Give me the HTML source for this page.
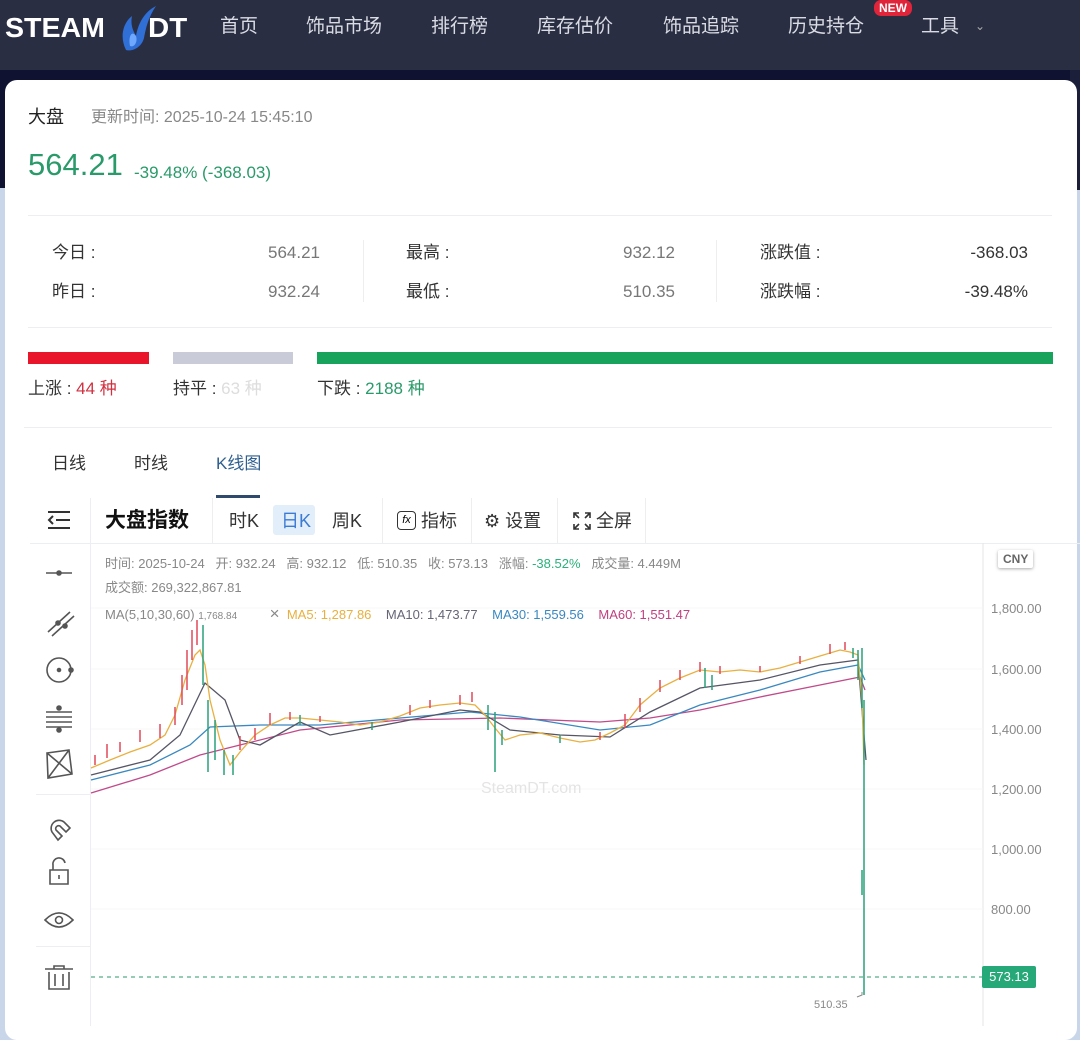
<!DOCTYPE html>
<html><head><meta charset="utf-8"><style>
*{margin:0;padding:0;box-sizing:border-box}
body{width:1080px;height:1026px;overflow:hidden;background:#c9d6ea;font-family:"Liberation Sans","Noto Sans CJK SC",sans-serif;position:relative}
.hdr{position:absolute;left:0;top:0;width:1080px;height:70px;background:#2a2e42}
.band{position:absolute;left:0;top:68px;width:1080px;height:120px;background:#0f1230}
.rside{position:absolute;right:0;top:68px;width:10px;height:122px;background:#1b1f3a}
.nav{position:absolute;top:17px;font-size:19px;line-height:1;color:#d9dce4}
.logo{position:absolute;top:14px;font-size:28px;line-height:1;font-weight:900;color:#fff;transform-origin:left}
.card{position:absolute;left:5px;top:80px;width:1072px;height:960px;background:#fff;border-radius:12px}
.a{position:absolute;white-space:nowrap;line-height:1}
.g{color:#2a9a6a}
.hr{position:absolute;height:1px;background:#eceef2}
.lbl{font-size:17px;color:#333}
.num{font-size:17px;color:#777}
.r{text-align:right}
.tb{font-size:18px;color:#333}
.ax{font-size:13px;color:#888}
.info{font-size:13px;color:#888}
</style></head><body>
<div class="band"></div><div class="rside"></div>
<div class="hdr">
<div class="logo" style="left:5px;transform:scaleX(1.02)">STEAM</div>
<div class="logo" style="left:148px;transform:scaleX(1.05)">DT</div>
<svg style="position:absolute;left:112px;top:2px" width="50" height="52" viewBox="0 0 50 52"><path d="M14 48 C8 36 10 22 20 14 C18 24 22 30 24 34 C26 22 32 10 44 4 C36 16 34 26 32 36 C30 44 22 50 14 48Z" fill="#2f6fd6"/><path d="M18 44 C16 34 20 28 24 34 C26 40 22 46 18 44Z" fill="#6fa8ff"/></svg>
<div class="nav" style="left:220px">首页</div>
<div class="nav" style="left:306px">饰品市场</div>
<div class="nav" style="left:431px">排行榜</div>
<div class="nav" style="left:537px">库存估价</div>
<div class="nav" style="left:663px">饰品追踪</div>
<div class="nav" style="left:788px">历史持仓</div>
<div class="a" style="left:874px;top:0;background:#e0243a;color:#fff;font-size:12px;font-weight:bold;padding:2px 5px;border-radius:7px">NEW</div>
<div class="nav" style="left:921px">工具</div>
<div class="a" style="left:975px;top:20px;color:#aaa;font-size:12px">&#8964;</div>
</div>
<div class="card"></div>
<div class="a" style="left:28px;top:108px;font-size:18px;color:#222">大盘</div>
<div class="a" style="left:91px;top:110px;font-size:16px;color:#888">更新时间: 2025-10-24 15:45:10</div>
<div class="a g" style="left:28px;top:149px;font-size:31px">564.21</div>
<div class="a g" style="left:134px;top:164px;font-size:17px">-39.48% (-368.03)</div>
<div class="hr" style="left:28px;top:215px;width:1024px"></div>
<div class="a lbl" style="left:52px;top:244px">今日 :</div><div class="a num g r" style="right:760px;top:244px">564.21</div>
<div class="a lbl" style="left:52px;top:283px">昨日 :</div><div class="a num r" style="right:760px;top:283px">932.24</div>
<div class="a" style="left:363px;top:240px;width:1px;height:62px;background:#eee"></div>
<div class="a lbl" style="left:406px;top:244px">最高 :</div><div class="a num g r" style="right:405px;top:244px">932.12</div>
<div class="a lbl" style="left:406px;top:283px">最低 :</div><div class="a num g r" style="right:405px;top:283px">510.35</div>
<div class="a" style="left:716px;top:240px;width:1px;height:62px;background:#eee"></div>
<div class="a lbl" style="left:760px;top:244px">涨跌值 :</div><div class="a num r" style="right:52px;top:244px;color:#333">-368.03</div>
<div class="a lbl" style="left:760px;top:283px">涨跌幅 :</div><div class="a num r" style="right:52px;top:283px;color:#333">-39.48%</div>
<div class="hr" style="left:28px;top:327px;width:1024px"></div>
<div class="a" style="left:28px;top:352px;width:121px;height:12px;background:#e8152b"></div>
<div class="a" style="left:173px;top:352px;width:120px;height:12px;background:#c9cbd8"></div>
<div class="a" style="left:317px;top:352px;width:736px;height:12px;background:#17a35c"></div>
<div class="a lbl" style="left:28px;top:380px">上涨 : <span style="color:#d03040">44 种</span></div>
<div class="a lbl" style="left:173px;top:380px">持平 : <span style="color:#ddd">63 种</span></div>
<div class="a lbl" style="left:317px;top:380px">下跌 : <span class="g">2188 种</span></div>
<div class="hr" style="left:24px;top:427px;width:1028px"></div>
<div class="a lbl" style="left:52px;top:455px">日线</div>
<div class="a lbl" style="left:134px;top:455px">时线</div>
<div class="a lbl" style="left:216px;top:455px;color:#2f5f8f">K线图</div>
<div class="a" style="left:216px;top:495px;width:44px;height:3px;background:#2f4a6a"></div>
<div class="hr" style="left:30px;top:543px;width:1050px"></div>
<div class="a" style="left:90px;top:498px;width:1px;height:528px;background:#eceef2"></div>
<svg class="a" style="left:46px;top:509px" width="26" height="22" fill="none" stroke="#333" stroke-width="2"><path d="M2 3H24M10 11H24M2 19H24M7 7L3 11L7 15"/></svg>
<div class="a" style="left:105px;top:510px;font-size:21px;font-weight:bold;color:#111">大盘指数</div>
<div class="a" style="left:212px;top:498px;width:1px;height:45px;background:#eee"></div>
<div class="a tb" style="left:229px;top:512px">时K</div>
<div class="a" style="left:273px;top:505px;width:42px;height:30px;background:#e3eefb;border-radius:3px"></div>
<div class="a tb" style="left:281px;top:512px;color:#3a7bd5">日K</div>
<div class="a tb" style="left:332px;top:512px">周K</div>
<div class="a" style="left:382px;top:498px;width:1px;height:45px;background:#eee"></div>
<div class="a" style="left:397px;top:511px;width:19px;height:19px;border:1.5px solid #333;border-radius:4px;font-size:11px;text-align:center;line-height:16px;font-style:italic">fx</div>
<div class="a tb" style="left:421px;top:512px">指标</div>
<div class="a" style="left:471px;top:498px;width:1px;height:45px;background:#eee"></div>
<div class="a tb" style="left:484px;top:512px">&#9881;&nbsp;设置</div>
<div class="a" style="left:557px;top:498px;width:1px;height:45px;background:#eee"></div>
<svg class="a" style="left:572px;top:511px" width="20" height="20" fill="none" stroke="#333" stroke-width="1.6"><path d="M2 7V2H7M13 2H18V7M18 13V18H13M7 18H2V13M2 2L7 7M18 2L13 7M18 18L13 13M2 18L7 13"/></svg>
<div class="a tb" style="left:596px;top:512px">全屏</div>
<div class="a" style="left:645px;top:498px;width:1px;height:45px;background:#eee"></div>
<svg class="a" style="left:36px;top:550px" width="50" height="440" viewBox="0 0 50 440" fill="none" stroke="#555" stroke-width="1.6">
<path d="M10 23 H36"/><circle cx="23" cy="23" r="2" fill="#555"/>
<path d="M12 82 L34 62 M16 86 L38 66"/><circle cx="22" cy="73" r="2" fill="#555"/><circle cx="29" cy="76" r="2" fill="#555"/>
<circle cx="23" cy="120" r="12"/><circle cx="23" cy="120" r="1.5" fill="#555"/><circle cx="35" cy="120" r="2" fill="#555"/>
<path d="M10 162 H36 M10 167 H36 M10 172 H36 M10 177 H36"/><circle cx="23" cy="158" r="2" fill="#555"/><circle cx="23" cy="180" r="2" fill="#555"/>
<path d="M11 203 L33 200 L36 224 L12 228 Z M11 203 L36 224 M33 200 L12 228"/>
<path d="M16 282 a8 8 0 0 1 12 -10 l6 6 l-4 4 l-6 -6 a3 3 0 0 0 -4 4 l6 6 l-4 4 z"/>
<path d="M14 320 h18 v14 h-18 z M17 320 v-5 a6 6 0 0 1 12 -2 M23 325 v4"/>
<path d="M9 370 Q23 356 37 370 Q23 384 9 370 Z"/><circle cx="23" cy="370" r="3.5"/>
<path d="M9 419 H37 M18 419 v-3 h10 v3 M13 422 v17 h20 v-17 M19 424 v12 M27 424 v12"/>
</svg>
<div class="hr" style="left:36px;top:794px;width:54px"></div>
<div class="hr" style="left:36px;top:946px;width:54px"></div>
<div class="a info" style="left:105px;top:557px">时间: 2025-10-24 &nbsp;&nbsp;开: 932.24 &nbsp;&nbsp;高: 932.12 &nbsp;&nbsp;低: 510.35 &nbsp;&nbsp;收: 573.13 &nbsp;&nbsp;涨幅: <span style="color:#2ab07a">-38.52%</span> &nbsp;&nbsp;成交量: 4.449M</div>
<div class="a info" style="left:105px;top:581px">成交额: 269,322,867.81</div>
<div class="a info" style="left:105px;top:605px">MA(5,10,30,60) <span style="font-size:10px">1,768.84</span> &nbsp;&nbsp;&nbsp;&nbsp;&nbsp;&nbsp;&nbsp;&nbsp;<span style="font-size:17px">×</span> &nbsp;<span style="color:#e8b040">MA5: 1,287.86</span> &nbsp;&nbsp;&nbsp;<span style="color:#667">MA10: 1,473.77</span> &nbsp;&nbsp;&nbsp;<span style="color:#3a88c0">MA30: 1,559.56</span> &nbsp;&nbsp;&nbsp;<span style="color:#c04080">MA60: 1,551.47</span></div>
<svg class="a" style="left:0;top:0" width="1080" height="1026" fill="none">
<line x1="983" y1="543" x2="983" y2="1026" stroke="#e5e5e5"/>
<g stroke="#f7f7f7"><line x1="91" y1="608" x2="983" y2="608"/><line x1="91" y1="669" x2="983" y2="669"/><line x1="91" y1="729" x2="983" y2="729"/><line x1="91" y1="789" x2="983" y2="789"/><line x1="91" y1="849" x2="983" y2="849"/><line x1="91" y1="909" x2="983" y2="909"/></g>
<line x1="91" y1="977" x2="983" y2="977" stroke="#2a9a6a" stroke-dasharray="4 4"/>
<polyline stroke="#c04a8a" stroke-width="1.3" points="91,793 150,775 200,755 240,745 300,730 400,720 500,718 600,722 650,718 700,710 760,697 820,685 860,677 865,690"/>
<polyline stroke="#3a88c0" stroke-width="1.3" points="91,780 150,765 190,745 210,727 260,725 320,725 400,718 470,712 520,717 600,730 650,725 700,705 760,690 820,672 858,665 865,680"/>
<polyline stroke="#556" stroke-width="1.3" points="91,775 150,760 180,735 205,683 225,700 240,740 260,745 300,722 330,735 400,722 460,710 480,712 510,730 560,735 610,737 650,712 700,688 760,680 820,665 858,660 866,760"/>
<polyline stroke="#e8b040" stroke-width="1.3" points="91,768 110,760 130,752 150,745 165,735 175,715 185,680 195,655 200,650 205,665 210,700 220,740 230,765 240,752 255,735 270,725 285,718 300,718 320,720 340,722 360,725 380,722 400,716 420,708 440,705 460,703 475,705 485,715 495,728 505,740 520,735 540,733 560,738 580,742 595,740 610,733 625,725 640,705 660,688 680,678 700,670 720,672 740,670 760,672 780,668 800,662 820,656 840,650 850,652 858,655 862,700 864,765"/>
<g stroke="#e04a5a" stroke-width="1.5">
<path d="M95 765v-10M107 758v-14M120 752v-10M140 742v-12M160 738v-14M175 725v-18M182 705v-30M187 690v-40M192 660v-30M197 645v-25M240 750v-14M255 740v-12M270 725v-12M290 720v-8M320 722v-6M410 715v-10M430 708v-8M460 705v-10M472 702v-10M600 740v-8M625 728v-14M640 712v-14M660 692v-12M680 680v-10M700 672v-10M720 674v-8M760 672v-6M800 664v-8M830 654v-10M845 650v-8"/>
</g>
<g stroke="#2aa07a" stroke-width="1.5">
<path d="M203 625v60M208 700v72M215 720v40M224 750v25M233 755v20M300 715v10M372 722v8M488 705v25M495 712v60M502 730v15M560 735v8M705 668v20M712 675v15M853 648v10M858 650v30M862 648v60M864 700v295M862 870v25"/>
</g>
<path d="M857 997 l5 -2 v-3" stroke="#888"/>
</svg>
<div class="a" style="left:481px;top:781px;font-size:16px;color:#e4e4e4">SteamDT.com</div>
<div class="a" style="left:998px;top:550px;font-size:12px;font-weight:bold;color:#666;padding:3px 5px;background:#fff;box-shadow:0 1px 3px #aaa;border-radius:2px">CNY</div>
<div class="a ax" style="left:991px;top:602px">1,800.00</div>
<div class="a ax" style="left:991px;top:663px">1,600.00</div>
<div class="a ax" style="left:991px;top:723px">1,400.00</div>
<div class="a ax" style="left:991px;top:783px">1,200.00</div>
<div class="a ax" style="left:991px;top:843px">1,000.00</div>
<div class="a ax" style="left:991px;top:903px">800.00</div>
<div class="a" style="left:982px;top:966px;width:54px;height:22px;background:#26a878;color:#fff;font-size:13px;text-align:center;line-height:22px;border-radius:2px">573.13</div>
<div class="a" style="left:814px;top:1000px;font-size:11px;color:#888">510.35</div>
</body></html>
